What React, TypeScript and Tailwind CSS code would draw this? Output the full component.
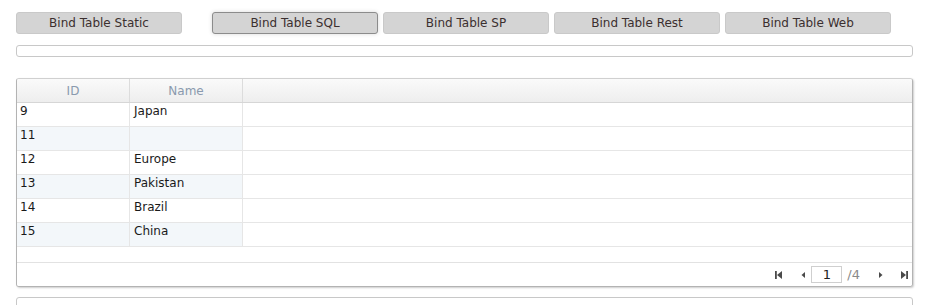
const rows = [
  { id: '9', name: 'Japan' },
  { id: '11', name: '' },
  { id: '12', name: 'Europe' },
  { id: '13', name: 'Pakistan' },
  { id: '14', name: 'Brazil' },
  { id: '15', name: 'China' },
];

const buttons = ['Bind Table Static', 'Bind Table SQL', 'Bind Table SP', 'Bind Table Rest', 'Bind Table Web'];

function PagerIcon({ kind }: { kind: 'first' | 'prev' | 'next' | 'last' }) {
  return (
    <svg width="9" height="10" viewBox="0 0 9 10" className="text-[#4a4a4a]">
      {kind === 'first' && (
        <>
          <rect x="1" y="1" width="1.8" height="8" fill="currentColor" />
          <path d="M8 1 L3 5 L8 9 Z" fill="currentColor" />
        </>
      )}
      {kind === 'prev' && <path d="M6 2 L2.5 5 L6 8 Z" fill="currentColor" />}
      {kind === 'next' && <path d="M3 2 L6.5 5 L3 8 Z" fill="currentColor" />}
      {kind === 'last' && (
        <>
          <path d="M1 1 L6 5 L1 9 Z" fill="currentColor" />
          <rect x="6.2" y="1" width="1.8" height="8" fill="currentColor" />
        </>
      )}
    </svg>
  );
}

export default function App() {
  return (
    <div className="w-[935px] h-[305px] overflow-hidden bg-white pt-3 pl-4 font-['DejaVu_Sans',sans-serif]">
      <div className="flex items-center">
        {buttons.map((b, i) => (
          <button
            key={b}
            className={`h-[22px] w-[166px] rounded-[3px] bg-[#d4d4d4] text-[12px] text-[#3b2f2f] ${
              i === 0 ? '' : i === 1 ? 'ml-[30px]' : 'ml-[5px]'
            } ${
              i === 1
                ? 'border border-[#8c8c8c] shadow-[0_0_4px_rgba(0,0,0,0.15)]'
                : 'border border-[#c9c9c9]'
            }`}
          >
            {b}
          </button>
        ))}
      </div>

      <div className="mt-[11px] h-[12px] w-[897px] rounded-[3px] border border-[#c8c8c8] bg-white" />

      <div className="mt-[21px] w-[897px] overflow-hidden rounded-[3px] border border-[#b3b3b3] border-t-[#d0d0d0] shadow-[1px_1px_2px_rgba(0,0,0,0.2)]">
        <div className="flex h-[24px] border-b border-[#d6d6d6] bg-gradient-to-b from-[#fafafa] to-[#eeeeee] text-[12px] text-[#8a9aae]">
          <div className="flex w-[113px] items-center justify-center border-r border-[#dcdcdc]">ID</div>
          <div className="flex w-[113px] items-center justify-center border-r border-[#dcdcdc]">Name</div>
          <div className="flex-1" />
        </div>
        {rows.map((r, i) => (
          <div key={r.id} className="flex h-[24px] border-b border-[#e6e6e6] text-[12px] leading-[16px] text-[#1a1a1a]">
            <div className={`w-[113px] border-r border-[#e6e6e6] pl-[3px] ${i % 2 ? 'bg-[#f3f7fa]' : 'bg-white'}`}>
              {r.id}
            </div>
            <div className={`w-[113px] border-r border-[#e6e6e6] pl-[4px] ${i % 2 ? 'bg-[#f3f7fa]' : 'bg-white'}`}>
              {r.name}
            </div>
            <div className="flex-1 bg-white" />
          </div>
        ))}
        <div className="h-[16px] border-b border-[#e2e2e2] bg-white" />
        <div className="flex h-[23px] items-center justify-end bg-white pr-[3px] text-[13px]">
          <PagerIcon kind="first" />
          <span className="ml-[16px] flex"><PagerIcon kind="prev" /></span>
          <div className="ml-[3px] flex h-[17px] w-[31px] items-center justify-center border border-[#cfcfcf] bg-white text-[#222]">
            1
          </div>
          <span className="ml-[5px] text-[#8a8a8a]">/4</span>
          <span className="ml-[16px] flex"><PagerIcon kind="next" /></span>
          <span className="ml-[15px] flex"><PagerIcon kind="last" /></span>
        </div>
      </div>

      <div className="mt-[10px] h-[20px] w-[897px] rounded-t-[3px] border border-[#c8c8c8] bg-white" />
    </div>
  );
}
